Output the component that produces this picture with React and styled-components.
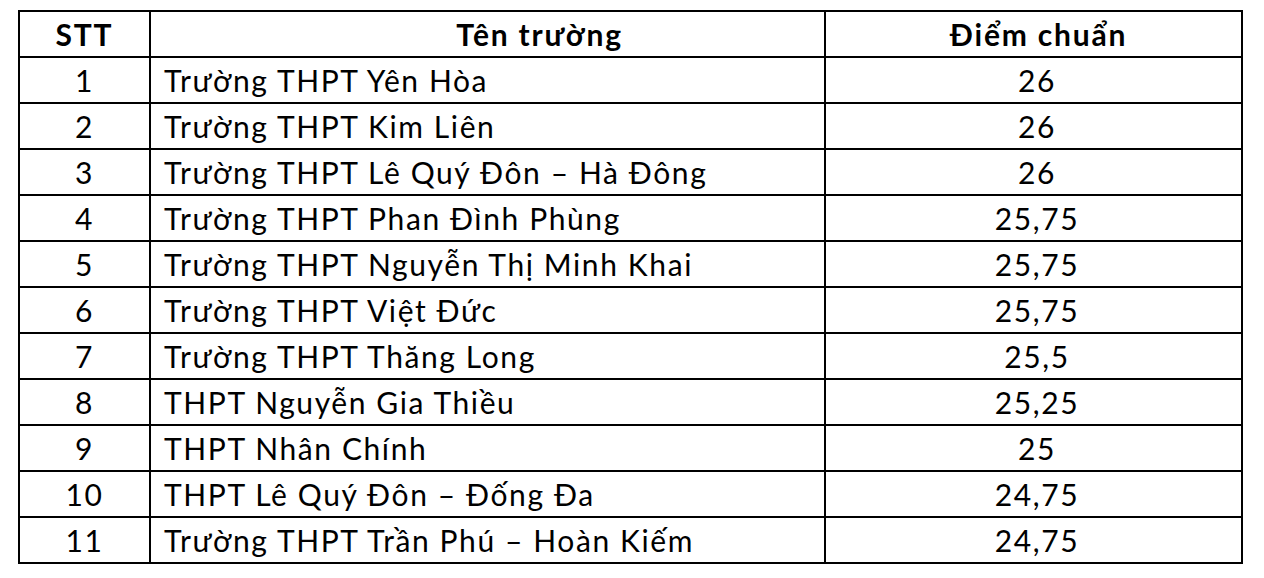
import React from "react";
import styled, { createGlobalStyle } from "styled-components";

const GlobalStyle = createGlobalStyle`
  html, body {
    margin: 0;
    padding: 0;
    background: #ffffff;
  }
  body {
    font-family: Lato, "Liberation Sans", sans-serif;
    color: #000;
  }
`;

const Page = styled.div`
  padding: 10px 0 0 18px;
`;

const Table = styled.table`
  border-collapse: collapse;
  width: 1223px;
  table-layout: fixed;
  border: 2px solid #000;
`;

const Row = styled.tr`
  height: 46px;
`;

const HeadCell = styled.th`
  border: 2px solid #000;
  font-weight: 700;
  font-size: 30px;
  letter-spacing: 1.8px;
  text-align: center;
  padding: 0 0 0 ${(p) => p.$shift || 0}px;
  line-height: 1;
`;

const Cell = styled.td`
  border: 2px solid #000;
  font-size: 30px;
  letter-spacing: 1.6px;
  line-height: 1;
  padding: 0 0 0 ${(p) => (p.$left ? 13 : p.$shift || 0)}px;
  text-align: ${(p) => (p.$left ? "left" : "center")};
  white-space: nowrap;
`;

const rows = [
  ["1", "Trường THPT Yên Hòa", "26"],
  ["2", "Trường THPT Kim Liên", "26"],
  ["3", "Trường THPT Lê Quý Đôn – Hà Đông", "26"],
  ["4", "Trường THPT Phan Đình Phùng", "25,75"],
  ["5", "Trường THPT Nguyễn Thị Minh Khai", "25,75"],
  ["6", "Trường THPT Việt Đức", "25,75"],
  ["7", "Trường THPT Thăng Long", "25,5"],
  ["8", "THPT Nguyễn Gia Thiều", "25,25"],
  ["9", "THPT Nhân Chính", "25"],
  ["10", "THPT Lê Quý Đôn – Đống Đa", "24,75"],
  ["11", "Trường THPT Trần Phú – Hoàn Kiếm", "24,75"],
];

const App = () => {
  return (
    <Page>
      <GlobalStyle />
      <Table>
        <colgroup>
          <col style={{ width: 131 }} />
          <col style={{ width: 675 }} />
          <col style={{ width: 417 }} />
        </colgroup>
        <thead>
          <Row>
            <HeadCell>STT</HeadCell>
            <HeadCell $shift={104}>Tên trường</HeadCell>
            <HeadCell $shift={10}>Điểm chuẩn</HeadCell>
          </Row>
        </thead>
        <tbody>
          {rows.map((r) => (
            <Row key={r[0]}>
              <Cell>{r[0]}</Cell>
              <Cell $left>{r[1]}</Cell>
              <Cell $shift={7}>{r[2]}</Cell>
            </Row>
          ))}
        </tbody>
      </Table>
    </Page>
  );
};

export default App;
